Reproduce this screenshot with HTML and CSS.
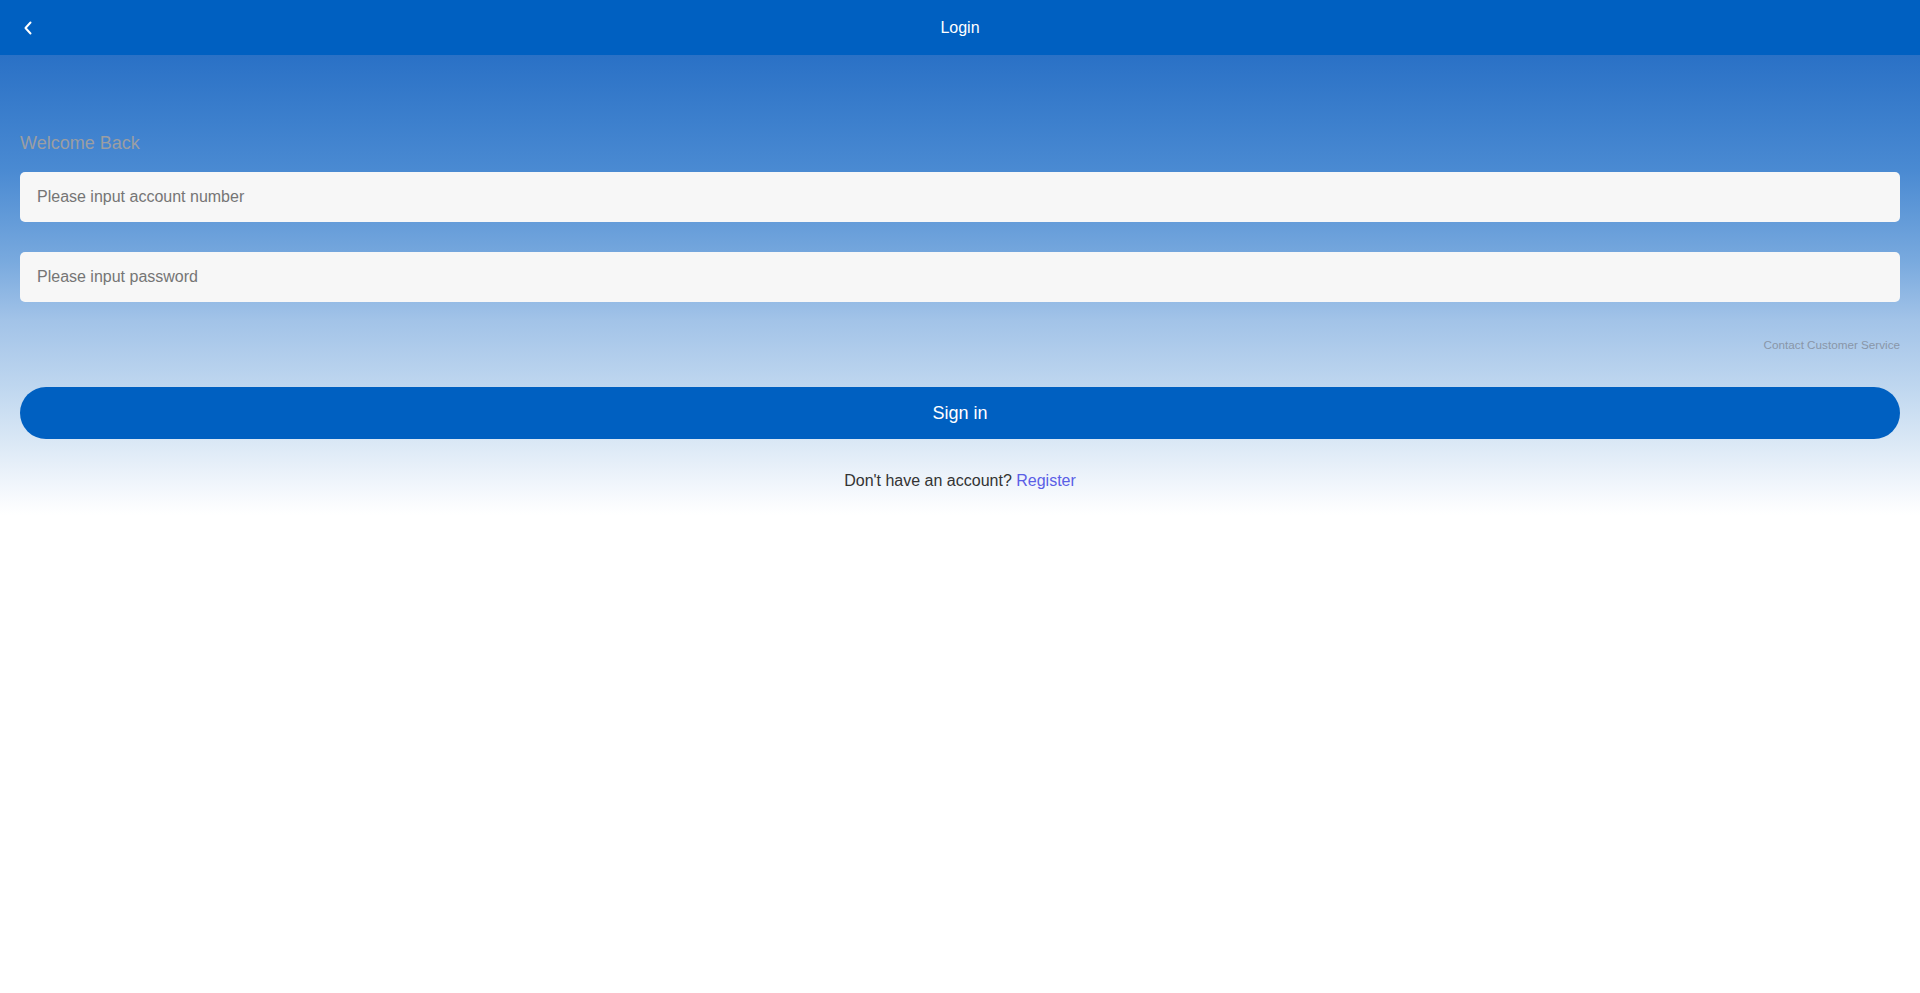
FILE: index.html
```html
<!DOCTYPE html>
<html lang="en">
<head>
  <meta charset="UTF-8">
  <meta name="viewport" content="width=device-width, initial-scale=1">
  <title>Login</title>
  <link rel="stylesheet" href="styles.css">
</head>
<body>
  <header class="nav-bar">
    <a href="#" class="nav-back" aria-label="Back">
      <svg width="10" height="14" viewBox="0 0 10 14">
        <path d="M7.5 1.5 L2.5 7 L7.5 12.5" fill="none" stroke="#fff" stroke-width="2" stroke-linecap="round" stroke-linejoin="round"/>
      </svg>
    </a>
    <h1 class="nav-title">Login</h1>
  </header>

  <main class="login-page">
    <p class="welcome">Welcome Back</p>
    <form id="loginForm" class="login-form">
      <input type="text" class="field" placeholder="Please input account number">
      <input type="password" class="field" placeholder="Please input password">
      <div class="service-row">
        <a href="#" class="service-link">Contact Customer Service</a>
      </div>
      <button type="submit" class="btn-signin">Sign in</button>
    </form>
    <p class="register-line">Don't have an account? <a href="#">Register</a></p>
  </main>
</body>
</html>
```

FILE: styles.css
```css
* {
  margin: 0;
  padding: 0;
  box-sizing: border-box;
  font-family: "Liberation Sans", Arial, sans-serif;
}

body {
  background: #fff;
  height: 100vh;
  overflow: hidden;
}

.nav-bar {
  height: 55px;
  background: #0060c1;
  display: flex;
  align-items: center;
  justify-content: center;
  position: relative;
}

.nav-back {
  position: absolute;
  left: 23px;
  top: 21px;
  display: flex;
}

.nav-title {
  color: #fff;
  font-size: 16px;
  font-weight: normal;
}

.login-page {
  padding: 76px 20px 0;
  height: 460px;
  background: linear-gradient(to bottom,
    #2a71c6 0px,
    #4a8ad2 115px,
    #78a9de 205px,
    #a2c3e8 265px,
    #bed6ef 330px,
    #dce9f6 390px,
    #f6f9fd 440px,
    #ffffff 460px);
}

.welcome {
  font-size: 18px;
  line-height: 24px;
  color: #9b9ea3;
  margin-bottom: 17px;
}

.login-form {
  display: flex;
  flex-direction: column;
}

.field {
  height: 50px;
  border: none;
  border-radius: 5px;
  background: #f7f7f7;
  padding: 0 17px;
  font-size: 16px;
  color: #333;
  outline: none;
  margin-bottom: 30px;
}

.field::placeholder {
  color: #757575;
}

.service-row {
  display: flex;
  justify-content: flex-end;
  margin-top: 5px;
}

.service-link {
  font-size: 11.7px;
  line-height: 16px;
  color: #8996a8;
  text-decoration: none;
}

.btn-signin {
  margin-top: 34px;
  height: 52px;
  border: none;
  border-radius: 26px;
  background: #0060c1;
  color: #fff;
  font-size: 18px;
  cursor: pointer;
}

.register-line {
  margin-top: 31px;
  text-align: center;
  font-size: 16px;
  line-height: 22px;
  color: #333;
}

.register-line a {
  color: #5a5ee6;
  text-decoration: none;
}
```
